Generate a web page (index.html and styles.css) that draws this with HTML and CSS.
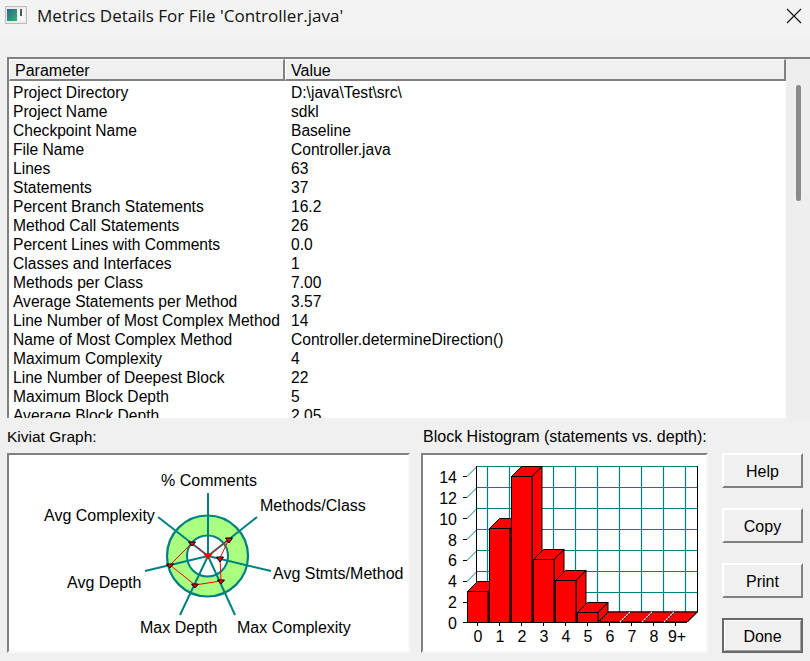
FILE: index.html
```html
<!DOCTYPE html>
<html lang="en">
<head>
    <meta charset="UTF-8">
    <meta name="viewport" content="width=device-width, initial-scale=1.0">
    <title>Metrics Details</title>
    <link rel="stylesheet" href="styles.css">
</head>
<body>

<div class="titlebar">
    <svg class="app-icon" width="22" height="18" viewBox="0 0 22 18">
        <defs>
            <linearGradient id="iconFill" x1="0" y1="0" x2="1" y2="1">
                <stop offset="0" stop-color="#1f6a96"/>
                <stop offset="1" stop-color="#45ab6a"/>
            </linearGradient>
        </defs>
        <rect x="0.5" y="0.5" width="21" height="17" fill="#ececec" stroke="#bcbcbc"/>
        <rect x="2" y="3" width="10" height="12" fill="url(#iconFill)"/>
        <rect x="12" y="3" width="8" height="12" fill="#f8f8f8"/>
        <rect x="15" y="3" width="2" height="7" fill="#50585c"/>
    </svg>
    <span class="title-text">Metrics Details For File 'Controller.java'</span>
    <svg class="close-icon" width="16" height="16" viewBox="0 0 16 16">
        <path d="M1 1 L15 15 M15 1 L1 15" stroke="#1a1a1a" stroke-width="1.3" fill="none"/>
    </svg>
</div>

<div class="details">
    <div class="list-main">
        <div class="list-header">
            <div class="head-cell head-param">Parameter</div>
            <div class="head-cell head-value">Value</div>
        </div>
        <div class="list-rows">
            <div class="row"><span class="param">Project Directory</span><span>D:\java\Test\src\</span></div>
            <div class="row"><span class="param">Project Name</span><span>sdkl</span></div>
            <div class="row"><span class="param">Checkpoint Name</span><span>Baseline</span></div>
            <div class="row"><span class="param">File Name</span><span>Controller.java</span></div>
            <div class="row"><span class="param">Lines</span><span>63</span></div>
            <div class="row"><span class="param">Statements</span><span>37</span></div>
            <div class="row"><span class="param">Percent Branch Statements</span><span>16.2</span></div>
            <div class="row"><span class="param">Method Call Statements</span><span>26</span></div>
            <div class="row"><span class="param">Percent Lines with Comments</span><span>0.0</span></div>
            <div class="row"><span class="param">Classes and Interfaces</span><span>1</span></div>
            <div class="row"><span class="param">Methods per Class</span><span>7.00</span></div>
            <div class="row"><span class="param">Average Statements per Method</span><span>3.57</span></div>
            <div class="row"><span class="param">Line Number of Most Complex Method</span><span>14</span></div>
            <div class="row"><span class="param">Name of Most Complex Method</span><span>Controller.determineDirection()</span></div>
            <div class="row"><span class="param">Maximum Complexity</span><span>4</span></div>
            <div class="row"><span class="param">Line Number of Deepest Block</span><span>22</span></div>
            <div class="row"><span class="param">Maximum Block Depth</span><span>5</span></div>
            <div class="row"><span class="param">Average Block Depth</span><span>2.05</span></div>
        </div>
    </div>
    <div class="scrollbar"><div class="thumb"></div></div>
</div>

<div class="bottom">
    <div class="kiviat-section">
        <div class="section-label">Kiviat Graph:</div>
        <div class="chart-panel">
            <!-- viewBox is in window coordinates -->
            <svg class="chart" width="399" height="196" viewBox="9 456 399 196">
                <circle cx="207.5" cy="557" r="40.5" fill="#a8ff80" stroke="#008080" stroke-width="2.2"/>
                <circle cx="207.5" cy="557" r="20.5" fill="#fff" stroke="#008080" stroke-width="2"/>
                <g stroke="#008080" stroke-width="2">
                    <line x1="208" y1="557" x2="208" y2="494"/>
                    <line x1="208" y1="557" x2="257" y2="518"/>
                    <line x1="208" y1="557" x2="271" y2="572"/>
                    <line x1="208" y1="557" x2="235" y2="616"/>
                    <line x1="208" y1="557" x2="180" y2="616"/>
                    <line x1="208" y1="557" x2="145" y2="572"/>
                    <line x1="208" y1="557" x2="158" y2="518"/>
                </g>
                <polygon points="208,557 229,540 220,559 221,582 195,586 170,566 192,544" fill="none" stroke="#ff0000" stroke-width="1"/>
                <g fill="#ff0000" stroke="#000" stroke-width="1">
                    <path d="M204 555 H212 L208 560 Z" stroke="#f00"/>
                    <path d="M225.5 539 H232.5 L229 544 Z"/>
                    <path d="M216.5 558 H223.5 L220 563 Z"/>
                    <path d="M217.5 581 H224.5 L221 585 Z"/>
                    <path d="M191.5 585 H198.5 L195 589 Z"/>
                    <path d="M166.5 565 H173.5 L170 569 Z"/>
                    <path d="M188.5 543 H195.5 L192 547 Z"/>
                </g>
                <g class="chart-text">
                    <text x="161" y="487">% Comments</text>
                    <text x="260" y="512">Methods/Class</text>
                    <text x="44" y="522">Avg Complexity</text>
                    <text x="273" y="580">Avg Stmts/Method</text>
                    <text x="67" y="589">Avg Depth</text>
                    <text x="140" y="634">Max Depth</text>
                    <text x="237" y="634">Max Complexity</text>
                </g>
            </svg>
        </div>
    </div>

    <div class="histogram-section">
        <div class="section-label">Block Histogram (statements vs. depth):</div>
        <div class="chart-panel">
            <svg class="chart" width="283" height="195" viewBox="423 456 283 195">
                <g class="grid" stroke="#008080" stroke-width="1.2">
                    <path d="M477 467.5 H697 M477 488.5 H697 M477 509.5 H697 M477 530.5 H697 M477 551.5 H697 M477 572.5 H697 M477 593.5 H697"/>
                    <path d="M487.5 467 V613 M509.5 467 V613 M531.5 467 V613 M553.5 467 V613 M575.5 467 V613 M597.5 467 V613 M619.5 467 V613 M641.5 467 V613 M663.5 467 V613 M685.5 467 V613"/>
                </g>
                <path d="M467 477.5 L477 467.5 M467 498.5 L477 488.5 M467 519.5 L477 509.5 M467 540.5 L477 530.5 M467 561.5 L477 551.5 M467 582.5 L477 572.5 M467 603.5 L477 593.5" stroke="#008080" fill="none"/>
                <path class="axis" d="M476.5 467 V613 M697.5 467 V613 H477 M697.5 613 L687.5 623 M467 623.5 H687"/>
                <path class="axis" d="M463 477.5 H467 M463 498.5 H467 M463 519.5 H467 M463 540.5 H467 M463 561.5 H467 M463 582.5 H467 M463 603.5 H467 M463 623.5 H467"/>
                <path class="axis" d="M477.5 624 V627 M499.5 624 V627 M521.5 624 V627 M543.5 624 V627 M565.5 624 V627 M587.5 624 V627 M609.5 624 V627 M631.5 624 V627 M653.5 624 V627 M675.5 624 V627"/>

                <!-- empty columns -->
                <g class="bar">
                    <polygon points="599,623 609,613 631,613 621,623"/>
                    <polygon points="621,623 631,613 653,613 643,623"/>
                    <polygon points="643,623 653,613 675,613 665,623"/>
                    <polygon points="665,623 675,613 697,613 687,623"/>
                </g>
                <path d="M598 623 L608 613 M620 623 L630 613 M642 623 L652 613 M664 623 L674 613" stroke="#fff" stroke-width="1.2" stroke-dasharray="2 1"/>

                <g class="bar">
                    <polygon points="467.5,592.5 477.5,582.5 498,582.5 488,592.5"/>
                    <polygon points="488,592.5 498,582.5 498,613 488,623"/>
                    <rect x="467.5" y="592.5" width="20.5" height="31"/>

                    <polygon points="489.5,529.5 499.5,519.5 520,519.5 510,529.5"/>
                    <polygon points="510,529.5 520,519.5 520,613 510,623"/>
                    <rect x="489.5" y="529.5" width="20.5" height="94"/>

                    <polygon points="511.5,477.5 521.5,467.5 542,467.5 532,477.5"/>
                    <polygon points="532,477.5 542,467.5 542,613 532,623"/>
                    <rect x="511.5" y="477.5" width="20.5" height="146"/>

                    <polygon points="533.5,560.5 543.5,550.5 564,550.5 554,560.5"/>
                    <polygon points="554,560.5 564,550.5 564,613 554,623"/>
                    <rect x="533.5" y="560.5" width="20.5" height="63"/>

                    <polygon points="555.5,581.5 565.5,571.5 586,571.5 576,581.5"/>
                    <polygon points="576,581.5 586,571.5 586,613 576,623"/>
                    <rect x="555.5" y="581.5" width="20.5" height="42"/>

                    <polygon points="577.5,613.5 587.5,603.5 608,603.5 598,613.5"/>
                    <polygon points="598,613.5 608,603.5 608,613 598,623"/>
                    <rect x="577.5" y="613.5" width="20.5" height="10"/>
                </g>

                <g class="chart-text y-labels">
                    <text x="457" y="484">14</text>
                    <text x="457" y="505">12</text>
                    <text x="457" y="526">10</text>
                    <text x="457" y="547">8</text>
                    <text x="457" y="567">6</text>
                    <text x="457" y="588">4</text>
                    <text x="457" y="609">2</text>
                    <text x="457" y="630">0</text>
                </g>
                <g class="chart-text x-labels">
                    <text x="478" y="643">0</text>
                    <text x="500" y="643">1</text>
                    <text x="522" y="643">2</text>
                    <text x="544" y="643">3</text>
                    <text x="566" y="643">4</text>
                    <text x="588" y="643">5</text>
                    <text x="610" y="643">6</text>
                    <text x="632" y="643">7</text>
                    <text x="654" y="643">8</text>
                    <text x="677" y="643">9+</text>
                </g>
            </svg>
        </div>
    </div>

    <div class="buttons">
        <button>Help</button>
        <button>Copy</button>
        <button>Print</button>
        <button class="default-btn">Done</button>
    </div>
</div>

</body>
</html>
```

FILE: styles.css
```css
body {
    font-family: "Liberation Sans", Arial, sans-serif;
    font-size: 16px;
    color: #000;
    background-color: #f0f0f0;
    width: 810px;
    height: 661px;
    margin: 0;
    overflow: hidden;
}

.titlebar {
    display: flex;
    align-items: center;
    height: 39px;
    padding: 0 8px 8px 5px;
    box-sizing: border-box;
    background-color: #f3f3f3;
}

.app-icon {
    margin-right: 10px;
    margin-top: -2px;
}

.title-text {
    flex: 1;
    font-family: "Open Sans", sans-serif;
    font-size: 17px;
    color: #111;
}

.details {
    display: flex;
    height: 361px;
    margin: 18px 0 0 7px;
    border-top: 2px solid #808080;
    background-color: #fff;
    box-sizing: border-box;
}

.list-main {
    flex: 1;
    display: flex;
    flex-direction: column;
    min-width: 0;
    border-left: 2px solid #808080;
    overflow: hidden;
}

.list-header {
    display: flex;
    flex: none;
    height: 22px;
}

.head-cell {
    box-sizing: border-box;
    height: 22px;
    line-height: 21px;
    background-color: #f0f0f0;
    border-top: 1px solid #fff;
    border-left: 1px solid #fff;
    border-right: 2px solid #808080;
    border-bottom: 2px solid #808080;
}

.head-param {
    width: 276px;
    padding-left: 5px;
}

.head-value {
    flex: 1;
    padding-left: 5px;
}

.list-rows {
    padding-top: 2px;
    font-size: 15.6px;
}

.row {
    display: flex;
    height: 19px;
    line-height: 19px;
    padding-left: 4px;
    white-space: nowrap;
}

.param {
    width: 278px;
}

.scrollbar {
    flex: none;
    width: 24px;
    background-color: #eeeeee;
}

.thumb {
    width: 5px;
    height: 116px;
    margin: 26px 0 0 10px;
    border-radius: 3px;
    background-color: #8a8a8a;
}

.bottom {
    display: flex;
    padding-left: 7px;
}

.section-label {
    height: 35px;
    padding-top: 10px;
    box-sizing: border-box;
    line-height: 18px;
}

.kiviat-section {
    width: 403px;
    margin-right: 11px;
    font-size: 15.5px;
}

.histogram-section {
    width: 287px;
    margin-right: 14px;
}

.histogram-section .section-label {
    padding-left: 2px;
}

.chart-panel {
    box-sizing: border-box;
    height: 200px;
    background-color: #fff;
    border: 2px solid;
    border-color: #808080 #f8f8f8 #f8f8f8 #808080;
}

.chart {
    display: block;
}

.chart-text text {
    font-family: "Liberation Sans", Arial, sans-serif;
    font-size: 16px;
    fill: #000;
}

.y-labels text {
    text-anchor: end;
}

.x-labels text {
    text-anchor: middle;
}

.grid {
    fill: none;
}

.axis {
    stroke: #000;
    fill: none;
}

.bar polygon,
.bar rect {
    fill: #ff0000;
    stroke: #000;
    stroke-width: 1;
}

.buttons {
    display: flex;
    flex-direction: column;
    gap: 20px;
    width: 81px;
    padding-top: 35px;
}

.buttons button {
    box-sizing: border-box;
    height: 35px;
    padding: 2px 0 0;
    font-family: "Liberation Sans", Arial, sans-serif;
    font-size: 16px;
    color: #000;
    background-color: #f0f0f0;
    border: 2px solid;
    border-color: #fff #808080 #808080 #fff;
}

.buttons .default-btn {
    border-color: #696969;
    border-width: 2px;
    box-shadow: inset 1px 1px 0 #fff, inset -1px -1px 0 #a0a0a0;
}
```
